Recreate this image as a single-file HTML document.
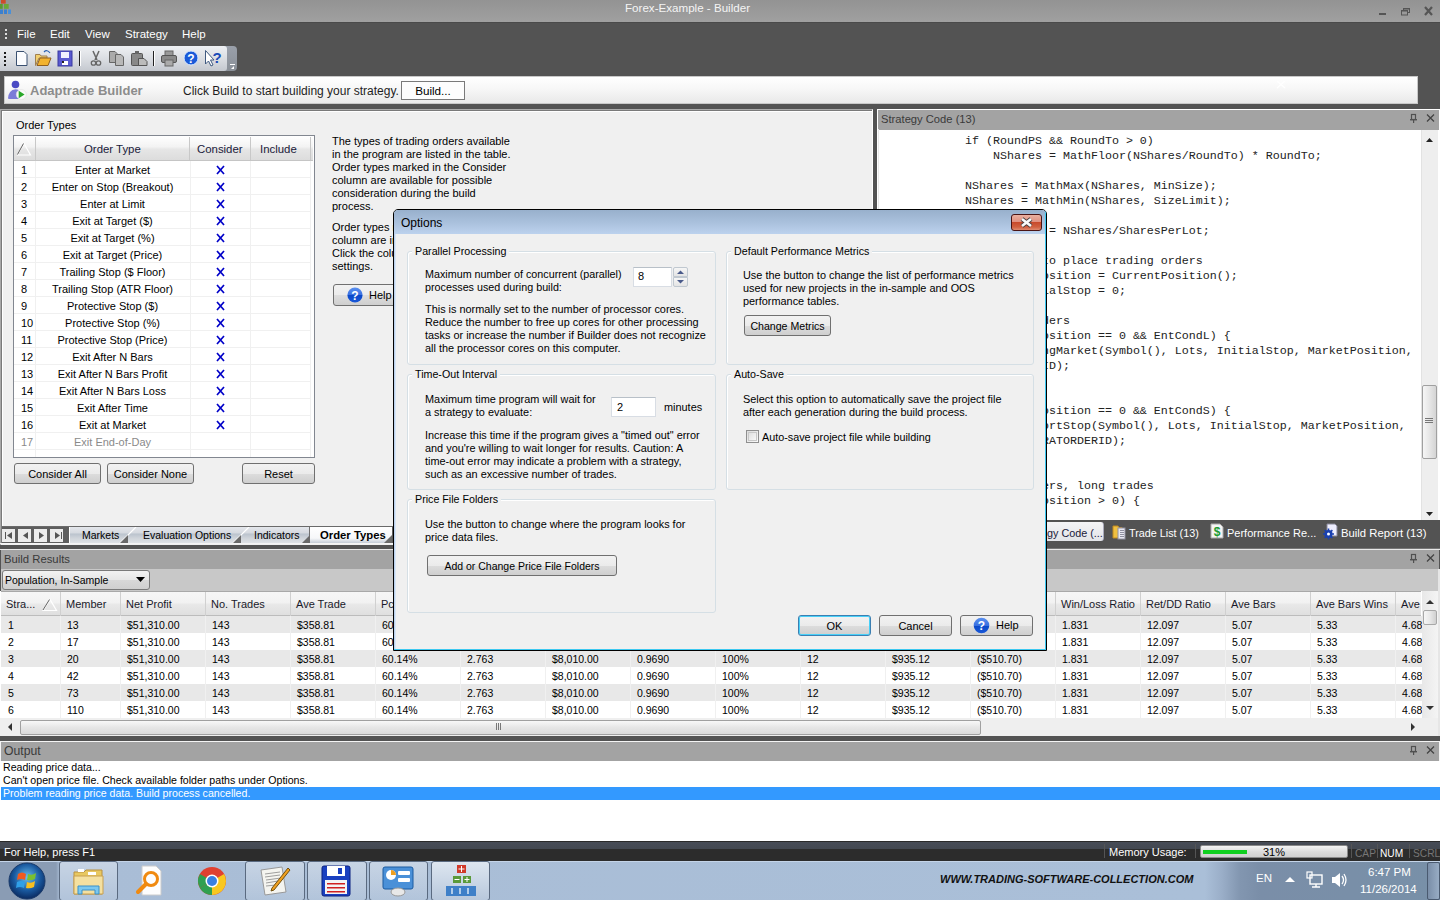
<!DOCTYPE html>
<html><head><meta charset="utf-8">
<style>
*{box-sizing:border-box;margin:0;padding:0}
html,body{width:1440px;height:900px;overflow:hidden;background:#535353;font-family:"Liberation Sans",sans-serif;font-size:11px;color:#000}
.a{position:absolute}
.t{position:absolute;white-space:pre;line-height:13px}
.btn{position:absolute;border:1px solid #707070;border-radius:3px;background:linear-gradient(#f2f2f2 0%,#ebebeb 50%,#dddddd 51%,#cfcfcf 100%);text-align:center;font-size:11px;color:#000}
.mono{font-family:"Liberation Mono",monospace}
</style></head><body>

<!-- TITLE BAR -->
<div class="a" style="left:0;top:0;width:1440px;height:22px;background:linear-gradient(#939393,#a0a0a0)"></div>
<div class="a" style="left:0;top:22px;width:1440px;height:1px;background:#4a4a4a"></div>
<div class="t" style="left:625px;top:1px;font-size:11.6px;color:#f4f4f4;line-height:14px">Forex-Example - Builder</div>
<!-- app icon -->
<svg class="a" style="left:0;top:0" width="12" height="16" viewBox="0 0 12 16"><rect x="1" y="0" width="4.7" height="3.6" fill="#d04a28"/><rect x="0" y="4" width="2.7" height="4.8" fill="#5a9a30"/><rect x="4" y="4" width="4.7" height="4.8" fill="#6aa838"/><rect x="0" y="9.5" width="3" height="4.5" fill="#3a80d0"/><rect x="4" y="9.5" width="3" height="4.5" fill="#3a80d0"/><rect x="8" y="9.5" width="3" height="4.5" fill="#4a90d8"/></svg>
<!-- window controls -->
<svg class="a" style="left:1376px;top:5px" width="64" height="12"><g fill="#555"><rect x="3" y="8" width="7" height="2"/></g>
<rect x="27.5" y="3.5" width="6" height="4" fill="none" stroke="#555"/><rect x="27" y="3" width="7" height="1.5" fill="#555"/>
<rect x="25.5" y="5.5" width="6" height="4.5" fill="#999" stroke="#555"/><rect x="25" y="5" width="7" height="1.5" fill="#555"/>
<path d="M49 2 L56 10 M56 2 L49 10" stroke="#555" stroke-width="2.2"/></svg>
<!-- MENU BAR -->
<div class="a" style="left:5px;top:29px;width:2px;height:12px;background:repeating-linear-gradient(#ddd 0 2px,transparent 2px 4px)"></div>
<div class="t" style="left:17px;top:28px;font-size:11.5px;color:#fff">File</div>
<div class="t" style="left:50px;top:28px;font-size:11.5px;color:#fff">Edit</div>
<div class="t" style="left:85px;top:28px;font-size:11.5px;color:#fff">View</div>
<div class="t" style="left:125px;top:28px;font-size:11.5px;color:#fff">Strategy</div>
<div class="t" style="left:182px;top:28px;font-size:11.5px;color:#fff">Help</div>

<!-- TOOLBAR -->
<div class="a" style="left:0;top:46px;width:237px;height:25px;border-radius:0 4px 4px 0;background:linear-gradient(#9aa0aa,#8a9098)"></div>
<div class="a" style="left:0;top:46px;width:227px;height:25px;border-radius:0 3px 3px 0;background:linear-gradient(#eef0f3,#d9dce1 55%,#c4c8cf)"></div>
<svg class="a" style="left:0;top:46px" width="240" height="25" viewBox="0 0 240 25">
<g fill="#1a1a1a"><rect x="4" y="6" width="2" height="2"/><rect x="4" y="10" width="2" height="2"/><rect x="4" y="14" width="2" height="2"/><rect x="4" y="18" width="2" height="2"/></g>
<!-- new -->
<path d="M16.5 5.5 H24 L27 8.5 V19.5 H16.5 Z" fill="#fbfcfe" stroke="#3a5070"/>
<!-- open -->
<path d="M35.5 8.5 H40 L41 10 H47 V12 H39 L35.5 19.5 Z" fill="#f2d070" stroke="#a08050"/>
<path d="M37 19.5 L40 12 H51 L48 19.5 Z" fill="#f2b330" stroke="#906020"/>
<path d="M44 6 Q47 3 50 7" fill="none" stroke="#2a60b0" stroke-width="1.2"/>
<!-- save -->
<rect x="58" y="5" width="14" height="15" fill="#5a5ad0" stroke="#3838a0"/>
<rect x="61" y="6" width="8" height="6" fill="#f0f0ff"/>
<rect x="62" y="15" width="6" height="4" fill="#fff"/><rect x="62" y="15" width="2" height="2" fill="#222"/>
<!-- sep -->
<rect x="79" y="5" width="1" height="15" fill="#222"/><rect x="80" y="5" width="1" height="15" fill="#fff"/>
<!-- cut -->
<path d="M93 5 L97 14 M99 5 L95 14" stroke="#666" stroke-width="1.5"/>
<circle cx="93.5" cy="17" r="2.2" fill="none" stroke="#666" stroke-width="1.3"/><circle cx="98.5" cy="17" r="2.2" fill="none" stroke="#666" stroke-width="1.3"/>
<!-- copy -->
<path d="M109.5 5.5 H115 L117 7.5 V16.5 H109.5 Z" fill="#aaa" stroke="#666"/>
<path d="M115.5 8.5 H121 L123.5 11 V19.5 H115.5 Z" fill="#b8b8b8" stroke="#666"/>
<!-- paste -->
<rect x="131.5" y="7.5" width="11" height="12" rx="1" fill="#888" stroke="#555"/>
<rect x="135" y="5" width="4" height="3" fill="#666"/>
<path d="M138.5 12.5 H144 L147 15.5 V19.5 H138.5 Z" fill="#bbb" stroke="#555"/>
<!-- sep -->
<rect x="153" y="5" width="1" height="15" fill="#222"/><rect x="154" y="5" width="1" height="15" fill="#fff"/>
<!-- print -->
<rect x="165" y="5" width="8" height="5" fill="#999" stroke="#666"/>
<rect x="161.5" y="9.5" width="15" height="7" rx="1.5" fill="#8a8a8a" stroke="#555"/>
<rect x="165" y="14" width="8" height="6" fill="#aaa" stroke="#666"/>
<!-- help -->
<circle cx="191" cy="12" r="7" fill="#1a5ad8" stroke="#d8e8ff" stroke-width="1"/>
<text x="191" y="16.5" font-family="Liberation Sans" font-weight="bold" font-size="12" fill="#fff" text-anchor="middle">?</text>
<!-- whats this -->
<path d="M205.5 4.5 L205.5 18 L208.5 15 L211 20 L213 19 L210.5 14 L214 14 Z" fill="#fff" stroke="#405a80"/>
<text x="217" y="16.5" font-family="Liberation Sans" font-weight="bold" font-size="15" fill="#1a4ab8" text-anchor="middle">?</text>
<!-- dropdown -->
<rect x="230" y="18" width="5" height="1" fill="#fff"/><path d="M234 20 L231 23 H234 Z" fill="#fff"/>
</svg>

<!-- BANNER -->
<div class="a" style="left:4px;top:76px;width:1414px;height:28px;background:linear-gradient(#ffffff,#f6f6f6 50%,#e9e9e9);border:1px solid #c8c8c8"></div>
<svg class="a" style="left:7px;top:80px" width="20" height="20" viewBox="0 0 20 20"><circle cx="8.5" cy="4.5" r="3.8" fill="#4a4ac4"/><path d="M1 18.5 Q1.5 10 8.5 9.3 Q12.5 9.6 13.5 12 L12 19 H2 Z" fill="#7c7cd8"/><circle cx="14.3" cy="14.5" r="5" fill="#fafafa" stroke="#e0e0e0" stroke-width="0.6"/><path d="M11.7 10.8 L17.6 14.5 L11.7 18.3 Z" fill="#2aa82a"/></svg>
<svg class="a banner-x" style="left:1276px;top:80px" width="10" height="9"><path d="M1 1 L9 8 M9 1 L1 8" stroke="#fff" stroke-width="1.2"/></svg>
<div class="t" style="left:30px;top:83px;font-size:13px;font-weight:bold;color:#8c8c8c;line-height:15px">Adaptrade Builder</div>
<div class="t" style="left:183px;top:84px;font-size:12px;color:#1e1e1e;line-height:15px">Click Build to start building your strategy.</div>
<div class="btn" style="left:401px;top:81px;width:64px;height:19px;line-height:18px;font-size:11.7px;border-radius:0;border-color:#7a7a7a;background:#fdfdfd">Build...</div>



<div class="a" style="left:0px;top:109px;width:873px;height:436px;background:#f0f0f0;border-top:1px solid #ababab;border-left:1px solid #a8a8a8;border-right:1px solid #fff"></div>
<div class="a" style="left:1px;top:110px;width:871px;height:433px;border-top:1px solid #7a7a7a;border-left:1px solid #7a7a7a;box-shadow:inset 1px 1px 0 #fff"></div>
<div class="t" style="left:16px;top:119px;font-size:11px;color:#000;line-height:13px;">Order Types</div>
<div class="a" style="left:13px;top:135px;width:302px;height:323px;background:#fff;border:1px solid #828790"></div>
<div class="a" style="left:14px;top:136px;width:299px;height:25px;background:linear-gradient(#ffffff,#f3f3f3 45%,#e6e6e6 55%,#dcdcdc);border-bottom:1px solid #c5c5c5"></div>
<div class="a" style="left:35px;top:137px;width:1px;height:23px;background:#c8c8c8"></div>
<div class="a" style="left:189px;top:137px;width:1px;height:23px;background:#c8c8c8"></div>
<div class="a" style="left:250px;top:137px;width:1px;height:23px;background:#c8c8c8"></div>
<div class="a" style="left:310px;top:137px;width:1px;height:23px;background:#c8c8c8"></div>
<svg class="a" style="left:16px;top:142px" width="16" height="14"><path d="M1.5 13 L8 1.5 L14.5 13 Z" fill="none" stroke="#fff" stroke-width="1.2"/><path d="M1.5 12.5 L7.5 1.5" stroke="#606060" stroke-width="1"/></svg>
<div class="t" style="left:84px;top:143px;font-size:11.4px;color:#1a1a3a;line-height:13px;">Order Type</div>
<div class="t" style="left:197px;top:143px;font-size:11.4px;color:#1a1a3a;line-height:13px;">Consider</div>
<div class="t" style="left:260px;top:143px;font-size:11.4px;color:#1a1a3a;line-height:13px;">Include</div>
<div class="a" style="left:14px;top:177px;width:296px;height:1px;background:#f0f0f0"></div>
<div class="t" style="left:21px;top:164px;font-size:11px;color:#000;line-height:13px;">1</div>
<div class="t" style="left:35px;top:164px;width:155px;text-align:center;font-size:11px;color:#000">Enter at Market</div>
<svg class="a" style="left:216px;top:165px" width="9" height="10"><path d="M1 1 L8 9 M8 1 L1 9" stroke="#0000c8" stroke-width="1.7"/></svg>
<div class="a" style="left:14px;top:194px;width:296px;height:1px;background:#f0f0f0"></div>
<div class="t" style="left:21px;top:181px;font-size:11px;color:#000;line-height:13px;">2</div>
<div class="t" style="left:35px;top:181px;width:155px;text-align:center;font-size:11px;color:#000">Enter on Stop (Breakout)</div>
<svg class="a" style="left:216px;top:182px" width="9" height="10"><path d="M1 1 L8 9 M8 1 L1 9" stroke="#0000c8" stroke-width="1.7"/></svg>
<div class="a" style="left:14px;top:211px;width:296px;height:1px;background:#f0f0f0"></div>
<div class="t" style="left:21px;top:198px;font-size:11px;color:#000;line-height:13px;">3</div>
<div class="t" style="left:35px;top:198px;width:155px;text-align:center;font-size:11px;color:#000">Enter at Limit</div>
<svg class="a" style="left:216px;top:199px" width="9" height="10"><path d="M1 1 L8 9 M8 1 L1 9" stroke="#0000c8" stroke-width="1.7"/></svg>
<div class="a" style="left:14px;top:228px;width:296px;height:1px;background:#f0f0f0"></div>
<div class="t" style="left:21px;top:215px;font-size:11px;color:#000;line-height:13px;">4</div>
<div class="t" style="left:35px;top:215px;width:155px;text-align:center;font-size:11px;color:#000">Exit at Target ($)</div>
<svg class="a" style="left:216px;top:216px" width="9" height="10"><path d="M1 1 L8 9 M8 1 L1 9" stroke="#0000c8" stroke-width="1.7"/></svg>
<div class="a" style="left:14px;top:245px;width:296px;height:1px;background:#f0f0f0"></div>
<div class="t" style="left:21px;top:232px;font-size:11px;color:#000;line-height:13px;">5</div>
<div class="t" style="left:35px;top:232px;width:155px;text-align:center;font-size:11px;color:#000">Exit at Target (%)</div>
<svg class="a" style="left:216px;top:233px" width="9" height="10"><path d="M1 1 L8 9 M8 1 L1 9" stroke="#0000c8" stroke-width="1.7"/></svg>
<div class="a" style="left:14px;top:262px;width:296px;height:1px;background:#f0f0f0"></div>
<div class="t" style="left:21px;top:249px;font-size:11px;color:#000;line-height:13px;">6</div>
<div class="t" style="left:35px;top:249px;width:155px;text-align:center;font-size:11px;color:#000">Exit at Target (Price)</div>
<svg class="a" style="left:216px;top:250px" width="9" height="10"><path d="M1 1 L8 9 M8 1 L1 9" stroke="#0000c8" stroke-width="1.7"/></svg>
<div class="a" style="left:14px;top:279px;width:296px;height:1px;background:#f0f0f0"></div>
<div class="t" style="left:21px;top:266px;font-size:11px;color:#000;line-height:13px;">7</div>
<div class="t" style="left:35px;top:266px;width:155px;text-align:center;font-size:11px;color:#000">Trailing Stop ($ Floor)</div>
<svg class="a" style="left:216px;top:267px" width="9" height="10"><path d="M1 1 L8 9 M8 1 L1 9" stroke="#0000c8" stroke-width="1.7"/></svg>
<div class="a" style="left:14px;top:296px;width:296px;height:1px;background:#f0f0f0"></div>
<div class="t" style="left:21px;top:283px;font-size:11px;color:#000;line-height:13px;">8</div>
<div class="t" style="left:35px;top:283px;width:155px;text-align:center;font-size:11px;color:#000">Trailing Stop (ATR Floor)</div>
<svg class="a" style="left:216px;top:284px" width="9" height="10"><path d="M1 1 L8 9 M8 1 L1 9" stroke="#0000c8" stroke-width="1.7"/></svg>
<div class="a" style="left:14px;top:313px;width:296px;height:1px;background:#f0f0f0"></div>
<div class="t" style="left:21px;top:300px;font-size:11px;color:#000;line-height:13px;">9</div>
<div class="t" style="left:35px;top:300px;width:155px;text-align:center;font-size:11px;color:#000">Protective Stop ($)</div>
<svg class="a" style="left:216px;top:301px" width="9" height="10"><path d="M1 1 L8 9 M8 1 L1 9" stroke="#0000c8" stroke-width="1.7"/></svg>
<div class="a" style="left:14px;top:330px;width:296px;height:1px;background:#f0f0f0"></div>
<div class="t" style="left:21px;top:317px;font-size:11px;color:#000;line-height:13px;">10</div>
<div class="t" style="left:35px;top:317px;width:155px;text-align:center;font-size:11px;color:#000">Protective Stop (%)</div>
<svg class="a" style="left:216px;top:318px" width="9" height="10"><path d="M1 1 L8 9 M8 1 L1 9" stroke="#0000c8" stroke-width="1.7"/></svg>
<div class="a" style="left:14px;top:347px;width:296px;height:1px;background:#f0f0f0"></div>
<div class="t" style="left:21px;top:334px;font-size:11px;color:#000;line-height:13px;">11</div>
<div class="t" style="left:35px;top:334px;width:155px;text-align:center;font-size:11px;color:#000">Protective Stop (Price)</div>
<svg class="a" style="left:216px;top:335px" width="9" height="10"><path d="M1 1 L8 9 M8 1 L1 9" stroke="#0000c8" stroke-width="1.7"/></svg>
<div class="a" style="left:14px;top:364px;width:296px;height:1px;background:#f0f0f0"></div>
<div class="t" style="left:21px;top:351px;font-size:11px;color:#000;line-height:13px;">12</div>
<div class="t" style="left:35px;top:351px;width:155px;text-align:center;font-size:11px;color:#000">Exit After N Bars</div>
<svg class="a" style="left:216px;top:352px" width="9" height="10"><path d="M1 1 L8 9 M8 1 L1 9" stroke="#0000c8" stroke-width="1.7"/></svg>
<div class="a" style="left:14px;top:381px;width:296px;height:1px;background:#f0f0f0"></div>
<div class="t" style="left:21px;top:368px;font-size:11px;color:#000;line-height:13px;">13</div>
<div class="t" style="left:35px;top:368px;width:155px;text-align:center;font-size:11px;color:#000">Exit After N Bars Profit</div>
<svg class="a" style="left:216px;top:369px" width="9" height="10"><path d="M1 1 L8 9 M8 1 L1 9" stroke="#0000c8" stroke-width="1.7"/></svg>
<div class="a" style="left:14px;top:398px;width:296px;height:1px;background:#f0f0f0"></div>
<div class="t" style="left:21px;top:385px;font-size:11px;color:#000;line-height:13px;">14</div>
<div class="t" style="left:35px;top:385px;width:155px;text-align:center;font-size:11px;color:#000">Exit After N Bars Loss</div>
<svg class="a" style="left:216px;top:386px" width="9" height="10"><path d="M1 1 L8 9 M8 1 L1 9" stroke="#0000c8" stroke-width="1.7"/></svg>
<div class="a" style="left:14px;top:415px;width:296px;height:1px;background:#f0f0f0"></div>
<div class="t" style="left:21px;top:402px;font-size:11px;color:#000;line-height:13px;">15</div>
<div class="t" style="left:35px;top:402px;width:155px;text-align:center;font-size:11px;color:#000">Exit After Time</div>
<svg class="a" style="left:216px;top:403px" width="9" height="10"><path d="M1 1 L8 9 M8 1 L1 9" stroke="#0000c8" stroke-width="1.7"/></svg>
<div class="a" style="left:14px;top:432px;width:296px;height:1px;background:#f0f0f0"></div>
<div class="t" style="left:21px;top:419px;font-size:11px;color:#000;line-height:13px;">16</div>
<div class="t" style="left:35px;top:419px;width:155px;text-align:center;font-size:11px;color:#000">Exit at Market</div>
<svg class="a" style="left:216px;top:420px" width="9" height="10"><path d="M1 1 L8 9 M8 1 L1 9" stroke="#0000c8" stroke-width="1.7"/></svg>
<div class="a" style="left:14px;top:449px;width:296px;height:1px;background:#f0f0f0"></div>
<div class="t" style="left:21px;top:436px;font-size:11px;color:#8a8a8a;line-height:13px;">17</div>
<div class="t" style="left:35px;top:436px;width:155px;text-align:center;font-size:11px;color:#8a8a8a">Exit End-of-Day</div>
<div class="a" style="left:35px;top:161px;width:1px;height:296px;background:#f0f0f0"></div>
<div class="a" style="left:190px;top:161px;width:1px;height:296px;background:#f0f0f0"></div>
<div class="a" style="left:250px;top:161px;width:1px;height:296px;background:#f0f0f0"></div>
<div class="a" style="left:310px;top:161px;width:1px;height:296px;background:#f0f0f0"></div>
<div class="btn" style="left:14px;top:463px;width:87px;height:21px;line-height:19px;padding-top:1px;font-size:11px;">Consider All</div>
<div class="btn" style="left:107px;top:463px;width:87px;height:21px;line-height:19px;padding-top:1px;font-size:11px;">Consider None</div>
<div class="btn" style="left:242px;top:463px;width:73px;height:21px;line-height:19px;padding-top:1px;font-size:11px;">Reset</div>
<div class="t" style="left:332px;top:135px;font-size:11px;color:#000;line-height:13px;">The types of trading orders available</div>
<div class="t" style="left:332px;top:148px;font-size:11px;color:#000;line-height:13px;">in the program are listed in the table.</div>
<div class="t" style="left:332px;top:161px;font-size:11px;color:#000;line-height:13px;">Order types marked in the Consider</div>
<div class="t" style="left:332px;top:174px;font-size:11px;color:#000;line-height:13px;">column are available for possible</div>
<div class="t" style="left:332px;top:187px;font-size:11px;color:#000;line-height:13px;">consideration during the build</div>
<div class="t" style="left:332px;top:200px;font-size:11px;color:#000;line-height:13px;">process.</div>
<div class="t" style="left:332px;top:221px;font-size:11px;color:#000;line-height:13px;">Order types marked in the Include</div>
<div class="t" style="left:332px;top:234px;font-size:11px;color:#000;line-height:13px;">column are included in every strategy.</div>
<div class="t" style="left:332px;top:247px;font-size:11px;color:#000;line-height:13px;">Click the column headers to change</div>
<div class="t" style="left:332px;top:260px;font-size:11px;color:#000;line-height:13px;">settings.</div>
<div class="btn" style="left:333px;top:284px;width:80px;height:22px"></div>
<svg class="a" style="left:347px;top:287px" width="17" height="17"><defs><linearGradient id="hg1" x1="0" y1="0" x2="0" y2="1"><stop offset="0" stop-color="#5a90f0"/><stop offset="0.5" stop-color="#3a70e0"/><stop offset="0.51" stop-color="#0a48c8"/><stop offset="1" stop-color="#1a58d8"/></linearGradient></defs><circle cx="8" cy="8" r="7.6" fill="url(#hg1)"/><text x="8" y="12.6" font-family="Liberation Sans" font-weight="bold" font-size="12" fill="#fff" text-anchor="middle">?</text></svg>
<div class="t" style="left:369px;top:289px;font-size:11px;color:#000;line-height:13px;">Help</div>
<div class="a" style="left:2px;top:526px;width:870px;height:1px;background:#6a6a6a"></div>
<div class="a" style="left:2px;top:527px;width:870px;height:16px;background:#5e5e5e"></div>
<div class="a" style="left:2px;top:529px;width:13px;height:13px;background:#ececec"></div>
<div class="a" style="left:18px;top:529px;width:13px;height:13px;background:#ececec"></div>
<div class="a" style="left:34px;top:529px;width:13px;height:13px;background:#ececec"></div>
<div class="a" style="left:50px;top:529px;width:13px;height:13px;background:#ececec"></div>
<svg class="a" style="left:2px;top:529px" width="64" height="13"><g fill="#555"><rect x="3" y="3" width="1" height="7"/><path d="M10 3 L5 6.5 L10 10 Z"/><path d="M26 3 L21 6.5 L26 10 Z"/><path d="M37 3 L42 6.5 L37 10 Z"/><path d="M53 3 L58 6.5 L53 10 Z"/><rect x="59" y="3" width="1" height="7"/></g></svg>
<svg class="a" style="left:0;top:527px" width="400" height="16"><defs><linearGradient id="tg" x1="0" y1="0" x2="0" y2="1"><stop offset="0" stop-color="#e4e7ec"/><stop offset="0.35" stop-color="#d6dae0"/><stop offset="0.45" stop-color="#bcc4ce"/><stop offset="0.7" stop-color="#cfd4da"/><stop offset="1" stop-color="#dfe2e6"/></linearGradient><linearGradient id="ta" x1="0" y1="0" x2="0" y2="1"><stop offset="0" stop-color="#ffffff"/><stop offset="0.7" stop-color="#f6f7f9"/><stop offset="1" stop-color="#c4ccd6"/></linearGradient></defs><rect x="69" y="0" width="323" height="16" fill="url(#tg)"/><rect x="69" y="0" width="1" height="16" fill="#fff"/><path d="M310 0 H392 V16 H310 Z" fill="url(#ta)"/><path d="M136 0 L120 16" stroke="#fff" stroke-width="1.2"/><path d="M128 8 L120 16 H128 Z" fill="#6a6a6a"/><path d="M249 0 L233 16" stroke="#fff" stroke-width="1.2"/><path d="M241 8 L233 16 H241 Z" fill="#6a6a6a"/><rect x="309" y="0" width="1" height="16" fill="#707070"/><path d="M310 8 L302 16 H310 Z" fill="#6a6a6a"/><path d="M392 8 L384 16 H392 Z" fill="#6a6a6a"/></svg>
<div class="t" style="left:82px;top:529px;font-size:10.5px;color:#000;line-height:13px;">Markets</div>
<div class="t" style="left:143px;top:529px;font-size:10.5px;color:#000;line-height:13px;">Evaluation Options</div>
<div class="t" style="left:254px;top:529px;font-size:10.5px;color:#000;line-height:13px;">Indicators</div>
<div class="t" style="left:320px;top:529px;font-size:11.3px;color:#000;line-height:13px;font-weight:bold">Order Types</div>
<div class="a" style="left:0px;top:543px;width:873px;height:1px;background:#f4f4f4"></div>
<div class="a" style="left:877px;top:109px;width:563px;height:411px;background:#fff;border-left:1px solid #fff;border-top:1px solid #fff"></div>
<div class="a" style="left:878px;top:110px;width:561px;height:20px;background:#a3a3a3"></div>
<div class="t" style="left:881px;top:113px;font-size:11.2px;color:#3a3a3a;line-height:13px;">Strategy Code (13)</div>
<svg class="a" style="left:1408px;top:113px" width="30" height="12"><g fill="#505050"><rect x="3.5" y="1.5" width="4" height="5" fill="none" stroke="#505050" stroke-width="1.2"/><rect x="2" y="6" width="7" height="1.4"/><rect x="5" y="7" width="1.2" height="3"/></g><path d="M19 1.5 L26 8.5 M26 1.5 L19 8.5" stroke="#444" stroke-width="1.3"/></svg>
<div class="a" style="left:878px;top:129px;width:1px;height:391px;background:#e8e8e8"></div>
<div class="a" style="left:1421px;top:130px;width:17px;height:390px;background:#eeeeee;border-left:1px solid #e2e2e2"></div>
<svg class="a" style="left:1421px;top:130px" width="17" height="390"><path d="M5 12 L8.5 8 L12 12 Z" fill="#222"/><path d="M5 382 L8.5 386 L12 382 Z" fill="#222"/></svg>
<div class="a" style="left:1422px;top:385px;width:15px;height:74px;background:linear-gradient(90deg,#f6f6f6,#e6e6e6 50%,#d4d4d4);border:1px solid #a0a0a0;border-radius:2px"></div>
<svg class="a" style="left:1425px;top:417px" width="9" height="8"><g fill="#777"><rect x="0" y="1" width="8" height="1"/><rect x="0" y="3" width="8" height="1"/><rect x="0" y="5" width="8" height="1"/></g></svg>
<div class="a" style="left:879px;top:130px;width:542px;height:390px;overflow:hidden">
<div class="t mono" style="left:86px;top:4px;font-size:11.67px;line-height:15px;color:#222">if (RoundPS &amp;&amp; RoundTo &gt; 0)</div>
<div class="t mono" style="left:114px;top:19px;font-size:11.67px;line-height:15px;color:#222">NShares = MathFloor(NShares/RoundTo) * RoundTo;</div>
<div class="t mono" style="left:86px;top:49px;font-size:11.67px;line-height:15px;color:#222">NShares = MathMax(NShares, MinSize);</div>
<div class="t mono" style="left:86px;top:64px;font-size:11.67px;line-height:15px;color:#222">NShares = MathMin(NShares, SizeLimit);</div>
<div class="t mono" style="left:86px;top:94px;font-size:11.67px;line-height:15px;color:#222">LotsToTrade = NShares/SharesPerLot;</div>
<div class="t mono" style="left:86px;top:124px;font-size:11.67px;line-height:15px;color:#222">// Prepare to place trading orders</div>
<div class="t mono" style="left:86px;top:139px;font-size:11.67px;line-height:15px;color:#222">CurrMarketPosition = CurrentPosition();</div>
<div class="t mono" style="left:86px;top:154px;font-size:11.67px;line-height:15px;color:#222">DefaultInitialStop = 0;</div>
<div class="t mono" style="left:86px;top:184px;font-size:11.67px;line-height:15px;color:#222">// Entry orders</div>
<div class="t mono" style="left:86px;top:199px;font-size:11.67px;line-height:15px;color:#222">if (MarketPosition == 0 &amp;&amp; EntCondL) {</div>
<div class="t mono" style="left:86px;top:214px;font-size:11.67px;line-height:15px;color:#222"> OrderSendingMarket(Symbol(), Lots, InitialStop, MarketPosition,</div>
<div class="t mono" style="left:86px;top:229px;font-size:11.67px;line-height:15px;color:#222">      ORDERID);</div>
<div class="t mono" style="left:86px;top:274px;font-size:11.67px;line-height:15px;color:#222">if (MarketPosition == 0 &amp;&amp; EntCondS) {</div>
<div class="t mono" style="left:86px;top:289px;font-size:11.67px;line-height:15px;color:#222">OrderSendShortStop(Symbol(), Lots, InitialStop, MarketPosition,</div>
<div class="t mono" style="left:86px;top:304px;font-size:11.67px;line-height:15px;color:#222">       GENERATORDERID);</div>
<div class="t mono" style="left:86px;top:349px;font-size:11.67px;line-height:15px;color:#222">// Exit orders, long trades</div>
<div class="t mono" style="left:86px;top:364px;font-size:11.67px;line-height:15px;color:#222">if (MarketPosition &gt; 0) {</div>
</div>
<div class="a" style="left:873px;top:520px;width:567px;height:28px;background:#535353"></div>
<div class="a" style="left:1000px;top:522px;width:104px;height:19px;background:linear-gradient(#f4f4f6,#e2e4e8);border-radius:0 3px 3px 0;border-right:1px solid #aab"></div>
<div class="t" style="left:1047px;top:527px;font-size:10.8px;color:#1a1a3a;line-height:13px;">gy Code (...</div>
<svg class="a" style="left:1112px;top:524px" width="16" height="16"><path d="M1 2 H6 L7 3.5 H10 V14 H1 Z" fill="#f0c040" stroke="#c08a20"/><rect x="6" y="4" width="7" height="11" fill="#e8e8f0" stroke="#9090a0"/><g fill="#9090a0"><rect x="8" y="6" width="4" height="1"/><rect x="8" y="8" width="4" height="1"/><rect x="8" y="10" width="4" height="1"/><rect x="8" y="12" width="4" height="1"/></g></svg>
<div class="t" style="left:1129px;top:527px;font-size:10.8px;color:#fff;line-height:13px;">Trade List (13)</div>
<svg class="a" style="left:1210px;top:523px" width="14" height="16"><path d="M1 1 H10 L13 4 V15 H1 Z" fill="#f4f4f4" stroke="#aaa"/><text x="7" y="13" font-family="Liberation Sans" font-weight="bold" font-size="12" fill="#1a9a30" text-anchor="middle">$</text></svg>
<div class="t" style="left:1227px;top:527px;font-size:11px;color:#fff;line-height:13px;">Performance Re...</div>
<svg class="a" style="left:1322px;top:523px" width="17" height="17"><path d="M5 1 H13 L15 3 V13 H5 Z" fill="#eef" stroke="#889"/><circle cx="6.5" cy="11" r="4" fill="#1a40b0"/><circle cx="6.5" cy="11" r="1.5" fill="#fff"/><g stroke="#1a40b0" stroke-width="1.6"><path d="M6.5 5.5 V16.5 M1 11 H12 M2.6 7.1 L10.4 14.9 M10.4 7.1 L2.6 14.9"/></g><circle cx="6.5" cy="11" r="1.5" fill="#fff"/></svg>
<div class="t" style="left:1341px;top:527px;font-size:11.3px;color:#fff;line-height:13px;">Build Report (13)</div>
<div class="a" style="left:873px;top:548px;width:567px;height:1px;background:#777"></div>
<div class="a" style="left:0px;top:549px;width:1440px;height:1px;background:#e8e8e8"></div>
<div class="a" style="left:1px;top:550px;width:1438px;height:19px;background:#a3a3a3"></div>
<div class="t" style="left:4px;top:553px;font-size:11.3px;color:#3a3a3a;line-height:13px;">Build Results</div>
<svg class="a" style="left:1408px;top:553px" width="30" height="12"><g fill="#505050"><rect x="3.5" y="1.5" width="4" height="5" fill="none" stroke="#505050" stroke-width="1.2"/><rect x="2" y="6" width="7" height="1.4"/><rect x="5" y="7" width="1.2" height="3"/></g><path d="M19 1.5 L26 8.5 M26 1.5 L19 8.5" stroke="#444" stroke-width="1.3"/></svg>
<div class="a" style="left:1px;top:569px;width:1438px;height:22px;background:#c8c8c8"></div>
<div class="a" style="left:2px;top:570px;width:148px;height:20px;border:1px solid #7a7a7a;border-radius:3px;background:linear-gradient(#f2f2f2,#e6e6e6 50%,#d8d8d8 51%,#cfcfcf)"></div>
<div class="t" style="left:5px;top:574px;font-size:10.5px;color:#000;line-height:13px;">Population, In-Sample</div>
<svg class="a" style="left:136px;top:577px" width="9" height="6"><path d="M0 0 H9 L4.5 5 Z" fill="#000"/></svg>
<div class="a" style="left:0px;top:591px;width:1422px;height:127px;background:#fff"></div>
<div class="a" style="left:1px;top:591px;width:1420px;height:25px;background:linear-gradient(#f6f6f6,#f2f2f2 45%,#e8e8e8 55%,#dfdfdf);border-top:1px solid #a8a8a8;border-bottom:1px solid #bcbcbc"></div>
<div class="a" style="left:1px;top:616px;width:1421px;height:17px;background:#e8e8e8"></div>
<div class="a" style="left:1px;top:633px;width:1421px;height:17px;background:#ffffff"></div>
<div class="a" style="left:1px;top:650px;width:1421px;height:17px;background:#e8e8e8"></div>
<div class="a" style="left:1px;top:667px;width:1421px;height:17px;background:#ffffff"></div>
<div class="a" style="left:1px;top:684px;width:1421px;height:17px;background:#e8e8e8"></div>
<div class="a" style="left:1px;top:701px;width:1421px;height:17px;background:#ffffff"></div>
<div class="a" style="left:0;top:591px;width:1422px;height:127px;overflow:hidden">
<div class="t" style="left:6px;top:7px;font-size:11px;color:#1a1a2a;line-height:13px;">Stra...</div>
<div class="t" style="left:8px;top:28px;font-size:10.5px;color:#000;line-height:13px;">1</div>
<div class="t" style="left:8px;top:45px;font-size:10.5px;color:#000;line-height:13px;">2</div>
<div class="t" style="left:8px;top:62px;font-size:10.5px;color:#000;line-height:13px;">3</div>
<div class="t" style="left:8px;top:79px;font-size:10.5px;color:#000;line-height:13px;">4</div>
<div class="t" style="left:8px;top:96px;font-size:10.5px;color:#000;line-height:13px;">5</div>
<div class="t" style="left:8px;top:113px;font-size:10.5px;color:#000;line-height:13px;">6</div>
<div class="a" style="left:60px;top:1px;width:1px;height:24px;background:#d0d0d0"></div>
<div class="a" style="left:60px;top:25px;width:1px;height:102px;background:#f0f0f0"></div>
<div class="t" style="left:66px;top:7px;font-size:11px;color:#1a1a2a;line-height:13px;">Member</div>
<div class="t" style="left:67px;top:28px;font-size:10.5px;color:#000;line-height:13px;">13</div>
<div class="t" style="left:67px;top:45px;font-size:10.5px;color:#000;line-height:13px;">17</div>
<div class="t" style="left:67px;top:62px;font-size:10.5px;color:#000;line-height:13px;">20</div>
<div class="t" style="left:67px;top:79px;font-size:10.5px;color:#000;line-height:13px;">42</div>
<div class="t" style="left:67px;top:96px;font-size:10.5px;color:#000;line-height:13px;">73</div>
<div class="t" style="left:67px;top:113px;font-size:10.5px;color:#000;line-height:13px;">110</div>
<div class="a" style="left:120px;top:1px;width:1px;height:24px;background:#d0d0d0"></div>
<div class="a" style="left:120px;top:25px;width:1px;height:102px;background:#f0f0f0"></div>
<div class="t" style="left:126px;top:7px;font-size:11px;color:#1a1a2a;line-height:13px;">Net Profit</div>
<div class="t" style="left:127px;top:28px;font-size:10.5px;color:#000;line-height:13px;">$51,310.00</div>
<div class="t" style="left:127px;top:45px;font-size:10.5px;color:#000;line-height:13px;">$51,310.00</div>
<div class="t" style="left:127px;top:62px;font-size:10.5px;color:#000;line-height:13px;">$51,310.00</div>
<div class="t" style="left:127px;top:79px;font-size:10.5px;color:#000;line-height:13px;">$51,310.00</div>
<div class="t" style="left:127px;top:96px;font-size:10.5px;color:#000;line-height:13px;">$51,310.00</div>
<div class="t" style="left:127px;top:113px;font-size:10.5px;color:#000;line-height:13px;">$51,310.00</div>
<div class="a" style="left:205px;top:1px;width:1px;height:24px;background:#d0d0d0"></div>
<div class="a" style="left:205px;top:25px;width:1px;height:102px;background:#f0f0f0"></div>
<div class="t" style="left:211px;top:7px;font-size:11px;color:#1a1a2a;line-height:13px;">No. Trades</div>
<div class="t" style="left:212px;top:28px;font-size:10.5px;color:#000;line-height:13px;">143</div>
<div class="t" style="left:212px;top:45px;font-size:10.5px;color:#000;line-height:13px;">143</div>
<div class="t" style="left:212px;top:62px;font-size:10.5px;color:#000;line-height:13px;">143</div>
<div class="t" style="left:212px;top:79px;font-size:10.5px;color:#000;line-height:13px;">143</div>
<div class="t" style="left:212px;top:96px;font-size:10.5px;color:#000;line-height:13px;">143</div>
<div class="t" style="left:212px;top:113px;font-size:10.5px;color:#000;line-height:13px;">143</div>
<div class="a" style="left:290px;top:1px;width:1px;height:24px;background:#d0d0d0"></div>
<div class="a" style="left:290px;top:25px;width:1px;height:102px;background:#f0f0f0"></div>
<div class="t" style="left:296px;top:7px;font-size:11px;color:#1a1a2a;line-height:13px;">Ave Trade</div>
<div class="t" style="left:297px;top:28px;font-size:10.5px;color:#000;line-height:13px;">$358.81</div>
<div class="t" style="left:297px;top:45px;font-size:10.5px;color:#000;line-height:13px;">$358.81</div>
<div class="t" style="left:297px;top:62px;font-size:10.5px;color:#000;line-height:13px;">$358.81</div>
<div class="t" style="left:297px;top:79px;font-size:10.5px;color:#000;line-height:13px;">$358.81</div>
<div class="t" style="left:297px;top:96px;font-size:10.5px;color:#000;line-height:13px;">$358.81</div>
<div class="t" style="left:297px;top:113px;font-size:10.5px;color:#000;line-height:13px;">$358.81</div>
<div class="a" style="left:375px;top:1px;width:1px;height:24px;background:#d0d0d0"></div>
<div class="a" style="left:375px;top:25px;width:1px;height:102px;background:#f0f0f0"></div>
<div class="t" style="left:381px;top:7px;font-size:11px;color:#1a1a2a;line-height:13px;">Pct Wins</div>
<div class="t" style="left:382px;top:28px;font-size:10.5px;color:#000;line-height:13px;">60.14%</div>
<div class="t" style="left:382px;top:45px;font-size:10.5px;color:#000;line-height:13px;">60.14%</div>
<div class="t" style="left:382px;top:62px;font-size:10.5px;color:#000;line-height:13px;">60.14%</div>
<div class="t" style="left:382px;top:79px;font-size:10.5px;color:#000;line-height:13px;">60.14%</div>
<div class="t" style="left:382px;top:96px;font-size:10.5px;color:#000;line-height:13px;">60.14%</div>
<div class="t" style="left:382px;top:113px;font-size:10.5px;color:#000;line-height:13px;">60.14%</div>
<div class="a" style="left:460px;top:1px;width:1px;height:24px;background:#d0d0d0"></div>
<div class="a" style="left:460px;top:25px;width:1px;height:102px;background:#f0f0f0"></div>
<div class="t" style="left:466px;top:7px;font-size:11px;color:#1a1a2a;line-height:13px;"></div>
<div class="t" style="left:467px;top:28px;font-size:10.5px;color:#000;line-height:13px;">2.763</div>
<div class="t" style="left:467px;top:45px;font-size:10.5px;color:#000;line-height:13px;">2.763</div>
<div class="t" style="left:467px;top:62px;font-size:10.5px;color:#000;line-height:13px;">2.763</div>
<div class="t" style="left:467px;top:79px;font-size:10.5px;color:#000;line-height:13px;">2.763</div>
<div class="t" style="left:467px;top:96px;font-size:10.5px;color:#000;line-height:13px;">2.763</div>
<div class="t" style="left:467px;top:113px;font-size:10.5px;color:#000;line-height:13px;">2.763</div>
<div class="a" style="left:545px;top:1px;width:1px;height:24px;background:#d0d0d0"></div>
<div class="a" style="left:545px;top:25px;width:1px;height:102px;background:#f0f0f0"></div>
<div class="t" style="left:551px;top:7px;font-size:11px;color:#1a1a2a;line-height:13px;"></div>
<div class="t" style="left:552px;top:28px;font-size:10.5px;color:#000;line-height:13px;">$8,010.00</div>
<div class="t" style="left:552px;top:45px;font-size:10.5px;color:#000;line-height:13px;">$8,010.00</div>
<div class="t" style="left:552px;top:62px;font-size:10.5px;color:#000;line-height:13px;">$8,010.00</div>
<div class="t" style="left:552px;top:79px;font-size:10.5px;color:#000;line-height:13px;">$8,010.00</div>
<div class="t" style="left:552px;top:96px;font-size:10.5px;color:#000;line-height:13px;">$8,010.00</div>
<div class="t" style="left:552px;top:113px;font-size:10.5px;color:#000;line-height:13px;">$8,010.00</div>
<div class="a" style="left:630px;top:1px;width:1px;height:24px;background:#d0d0d0"></div>
<div class="a" style="left:630px;top:25px;width:1px;height:102px;background:#f0f0f0"></div>
<div class="t" style="left:636px;top:7px;font-size:11px;color:#1a1a2a;line-height:13px;"></div>
<div class="t" style="left:637px;top:28px;font-size:10.5px;color:#000;line-height:13px;">0.9690</div>
<div class="t" style="left:637px;top:45px;font-size:10.5px;color:#000;line-height:13px;">0.9690</div>
<div class="t" style="left:637px;top:62px;font-size:10.5px;color:#000;line-height:13px;">0.9690</div>
<div class="t" style="left:637px;top:79px;font-size:10.5px;color:#000;line-height:13px;">0.9690</div>
<div class="t" style="left:637px;top:96px;font-size:10.5px;color:#000;line-height:13px;">0.9690</div>
<div class="t" style="left:637px;top:113px;font-size:10.5px;color:#000;line-height:13px;">0.9690</div>
<div class="a" style="left:715px;top:1px;width:1px;height:24px;background:#d0d0d0"></div>
<div class="a" style="left:715px;top:25px;width:1px;height:102px;background:#f0f0f0"></div>
<div class="t" style="left:721px;top:7px;font-size:11px;color:#1a1a2a;line-height:13px;"></div>
<div class="t" style="left:722px;top:28px;font-size:10.5px;color:#000;line-height:13px;">100%</div>
<div class="t" style="left:722px;top:45px;font-size:10.5px;color:#000;line-height:13px;">100%</div>
<div class="t" style="left:722px;top:62px;font-size:10.5px;color:#000;line-height:13px;">100%</div>
<div class="t" style="left:722px;top:79px;font-size:10.5px;color:#000;line-height:13px;">100%</div>
<div class="t" style="left:722px;top:96px;font-size:10.5px;color:#000;line-height:13px;">100%</div>
<div class="t" style="left:722px;top:113px;font-size:10.5px;color:#000;line-height:13px;">100%</div>
<div class="a" style="left:800px;top:1px;width:1px;height:24px;background:#d0d0d0"></div>
<div class="a" style="left:800px;top:25px;width:1px;height:102px;background:#f0f0f0"></div>
<div class="t" style="left:806px;top:7px;font-size:11px;color:#1a1a2a;line-height:13px;"></div>
<div class="t" style="left:807px;top:28px;font-size:10.5px;color:#000;line-height:13px;">12</div>
<div class="t" style="left:807px;top:45px;font-size:10.5px;color:#000;line-height:13px;">12</div>
<div class="t" style="left:807px;top:62px;font-size:10.5px;color:#000;line-height:13px;">12</div>
<div class="t" style="left:807px;top:79px;font-size:10.5px;color:#000;line-height:13px;">12</div>
<div class="t" style="left:807px;top:96px;font-size:10.5px;color:#000;line-height:13px;">12</div>
<div class="t" style="left:807px;top:113px;font-size:10.5px;color:#000;line-height:13px;">12</div>
<div class="a" style="left:885px;top:1px;width:1px;height:24px;background:#d0d0d0"></div>
<div class="a" style="left:885px;top:25px;width:1px;height:102px;background:#f0f0f0"></div>
<div class="t" style="left:891px;top:7px;font-size:11px;color:#1a1a2a;line-height:13px;"></div>
<div class="t" style="left:892px;top:28px;font-size:10.5px;color:#000;line-height:13px;">$935.12</div>
<div class="t" style="left:892px;top:45px;font-size:10.5px;color:#000;line-height:13px;">$935.12</div>
<div class="t" style="left:892px;top:62px;font-size:10.5px;color:#000;line-height:13px;">$935.12</div>
<div class="t" style="left:892px;top:79px;font-size:10.5px;color:#000;line-height:13px;">$935.12</div>
<div class="t" style="left:892px;top:96px;font-size:10.5px;color:#000;line-height:13px;">$935.12</div>
<div class="t" style="left:892px;top:113px;font-size:10.5px;color:#000;line-height:13px;">$935.12</div>
<div class="a" style="left:970px;top:1px;width:1px;height:24px;background:#d0d0d0"></div>
<div class="a" style="left:970px;top:25px;width:1px;height:102px;background:#f0f0f0"></div>
<div class="t" style="left:976px;top:7px;font-size:11px;color:#1a1a2a;line-height:13px;"></div>
<div class="t" style="left:977px;top:28px;font-size:10.5px;color:#000;line-height:13px;">($510.70)</div>
<div class="t" style="left:977px;top:45px;font-size:10.5px;color:#000;line-height:13px;">($510.70)</div>
<div class="t" style="left:977px;top:62px;font-size:10.5px;color:#000;line-height:13px;">($510.70)</div>
<div class="t" style="left:977px;top:79px;font-size:10.5px;color:#000;line-height:13px;">($510.70)</div>
<div class="t" style="left:977px;top:96px;font-size:10.5px;color:#000;line-height:13px;">($510.70)</div>
<div class="t" style="left:977px;top:113px;font-size:10.5px;color:#000;line-height:13px;">($510.70)</div>
<div class="a" style="left:1055px;top:1px;width:1px;height:24px;background:#d0d0d0"></div>
<div class="a" style="left:1055px;top:25px;width:1px;height:102px;background:#f0f0f0"></div>
<div class="t" style="left:1061px;top:7px;font-size:11px;color:#1a1a2a;line-height:13px;">Win/Loss Ratio</div>
<div class="t" style="left:1062px;top:28px;font-size:10.5px;color:#000;line-height:13px;">1.831</div>
<div class="t" style="left:1062px;top:45px;font-size:10.5px;color:#000;line-height:13px;">1.831</div>
<div class="t" style="left:1062px;top:62px;font-size:10.5px;color:#000;line-height:13px;">1.831</div>
<div class="t" style="left:1062px;top:79px;font-size:10.5px;color:#000;line-height:13px;">1.831</div>
<div class="t" style="left:1062px;top:96px;font-size:10.5px;color:#000;line-height:13px;">1.831</div>
<div class="t" style="left:1062px;top:113px;font-size:10.5px;color:#000;line-height:13px;">1.831</div>
<div class="a" style="left:1140px;top:1px;width:1px;height:24px;background:#d0d0d0"></div>
<div class="a" style="left:1140px;top:25px;width:1px;height:102px;background:#f0f0f0"></div>
<div class="t" style="left:1146px;top:7px;font-size:11px;color:#1a1a2a;line-height:13px;">Ret/DD Ratio</div>
<div class="t" style="left:1147px;top:28px;font-size:10.5px;color:#000;line-height:13px;">12.097</div>
<div class="t" style="left:1147px;top:45px;font-size:10.5px;color:#000;line-height:13px;">12.097</div>
<div class="t" style="left:1147px;top:62px;font-size:10.5px;color:#000;line-height:13px;">12.097</div>
<div class="t" style="left:1147px;top:79px;font-size:10.5px;color:#000;line-height:13px;">12.097</div>
<div class="t" style="left:1147px;top:96px;font-size:10.5px;color:#000;line-height:13px;">12.097</div>
<div class="t" style="left:1147px;top:113px;font-size:10.5px;color:#000;line-height:13px;">12.097</div>
<div class="a" style="left:1225px;top:1px;width:1px;height:24px;background:#d0d0d0"></div>
<div class="a" style="left:1225px;top:25px;width:1px;height:102px;background:#f0f0f0"></div>
<div class="t" style="left:1231px;top:7px;font-size:11px;color:#1a1a2a;line-height:13px;">Ave Bars</div>
<div class="t" style="left:1232px;top:28px;font-size:10.5px;color:#000;line-height:13px;">5.07</div>
<div class="t" style="left:1232px;top:45px;font-size:10.5px;color:#000;line-height:13px;">5.07</div>
<div class="t" style="left:1232px;top:62px;font-size:10.5px;color:#000;line-height:13px;">5.07</div>
<div class="t" style="left:1232px;top:79px;font-size:10.5px;color:#000;line-height:13px;">5.07</div>
<div class="t" style="left:1232px;top:96px;font-size:10.5px;color:#000;line-height:13px;">5.07</div>
<div class="t" style="left:1232px;top:113px;font-size:10.5px;color:#000;line-height:13px;">5.07</div>
<div class="a" style="left:1310px;top:1px;width:1px;height:24px;background:#d0d0d0"></div>
<div class="a" style="left:1310px;top:25px;width:1px;height:102px;background:#f0f0f0"></div>
<div class="t" style="left:1316px;top:7px;font-size:11px;color:#1a1a2a;line-height:13px;">Ave Bars Wins</div>
<div class="t" style="left:1317px;top:28px;font-size:10.5px;color:#000;line-height:13px;">5.33</div>
<div class="t" style="left:1317px;top:45px;font-size:10.5px;color:#000;line-height:13px;">5.33</div>
<div class="t" style="left:1317px;top:62px;font-size:10.5px;color:#000;line-height:13px;">5.33</div>
<div class="t" style="left:1317px;top:79px;font-size:10.5px;color:#000;line-height:13px;">5.33</div>
<div class="t" style="left:1317px;top:96px;font-size:10.5px;color:#000;line-height:13px;">5.33</div>
<div class="t" style="left:1317px;top:113px;font-size:10.5px;color:#000;line-height:13px;">5.33</div>
<div class="a" style="left:1395px;top:1px;width:1px;height:24px;background:#d0d0d0"></div>
<div class="a" style="left:1395px;top:25px;width:1px;height:102px;background:#f0f0f0"></div>
<div class="t" style="left:1401px;top:7px;font-size:11px;color:#1a1a2a;line-height:13px;">Ave Bars Losses</div>
<div class="t" style="left:1402px;top:28px;font-size:10.5px;color:#000;line-height:13px;">4.68</div>
<div class="t" style="left:1402px;top:45px;font-size:10.5px;color:#000;line-height:13px;">4.68</div>
<div class="t" style="left:1402px;top:62px;font-size:10.5px;color:#000;line-height:13px;">4.68</div>
<div class="t" style="left:1402px;top:79px;font-size:10.5px;color:#000;line-height:13px;">4.68</div>
<div class="t" style="left:1402px;top:96px;font-size:10.5px;color:#000;line-height:13px;">4.68</div>
<div class="t" style="left:1402px;top:113px;font-size:10.5px;color:#000;line-height:13px;">4.68</div>
<svg class="a" style="left:42px;top:7px" width="16" height="14"><path d="M1 12.5 L8 1.5 L14.5 12.5 Z" fill="none" stroke="#fff" stroke-width="1.2"/><path d="M1 12 L7.5 1.5" stroke="#505050" stroke-width="0.9"/></svg>
</div>
<div class="a" style="left:1422px;top:591px;width:16px;height:127px;background:linear-gradient(90deg,#e8e8e8,#f4f4f4)"></div>
<svg class="a" style="left:1422px;top:591px" width="16" height="127"><path d="M4 13 L8 9 L12 13 Z" fill="#333"/><path d="M4 115 L8 119 L12 115 Z" fill="#333"/></svg>
<div class="a" style="left:1423px;top:610px;width:14px;height:15px;background:linear-gradient(90deg,#f6f6f6,#e8e8e8 50%,#d0d0d0);border:1px solid #a8a8a8;border-radius:2px"></div>
<div class="a" style="left:0px;top:718px;width:1440px;height:18px;background:#efefef"></div>
<div class="a" style="left:1438px;top:569px;width:2px;height:167px;background:#e6e6e6"></div>
<svg class="a" style="left:1px;top:718px" width="1438" height="18"><path d="M11 5 L7 9 L11 13 Z" fill="#333"/><path d="M1410 5 L1414 9 L1410 13 Z" fill="#333"/></svg>
<div class="a" style="left:20px;top:720px;width:961px;height:15px;background:linear-gradient(#f8f8f8,#e6e6e6 50%,#dadada);border:1px solid #a0a0a0;border-radius:2px"></div>
<svg class="a" style="left:496px;top:723px" width="8" height="8"><g fill="#777"><rect x="0" y="0" width="1" height="7"/><rect x="2" y="0" width="1" height="7"/><rect x="4" y="0" width="1" height="7"/></g></svg>
<div class="a" style="left:0px;top:736px;width:1440px;height:5px;background:#535353"></div>
<div class="a" style="left:0px;top:741px;width:1440px;height:20px;background:#f4f4f4"></div>
<div class="a" style="left:1px;top:742px;width:1438px;height:19px;background:#a3a3a3"></div>
<div class="t" style="left:4px;top:745px;font-size:12.2px;color:#3a3a3a;line-height:13px;">Output</div>
<svg class="a" style="left:1408px;top:745px" width="30" height="12"><g fill="#505050"><rect x="3.5" y="1.5" width="4" height="5" fill="none" stroke="#505050" stroke-width="1.2"/><rect x="2" y="6" width="7" height="1.4"/><rect x="5" y="7" width="1.2" height="3"/></g><path d="M19 1.5 L26 8.5 M26 1.5 L19 8.5" stroke="#444" stroke-width="1.3"/></svg>
<div class="a" style="left:0px;top:761px;width:1440px;height:80px;background:#fff"></div>
<div class="t" style="left:3px;top:761px;font-size:10.6px;color:#000;line-height:13px;">Reading price data...</div>
<div class="t" style="left:3px;top:774px;font-size:10.6px;color:#000;line-height:13px;">Can&#x27;t open price file. Check available folder paths under Options.</div>
<div class="a" style="left:1px;top:787px;width:1439px;height:13px;background:#3399ff"></div>
<div class="t" style="left:3px;top:787px;font-size:10.6px;color:#fff;line-height:13px;">Problem reading price data. Build process cancelled.</div>
<div class="a" style="left:0px;top:841px;width:1440px;height:20px;background:linear-gradient(#2a2a2a 0,#2a2a2a 1px,#474c56 1px,#434851 8px,#2c2c2c 8px,#2c2c2c)"></div>
<div class="t" style="left:4px;top:846px;font-size:11px;color:#fff;line-height:13px;">For Help, press F1</div>
<div class="a" style="left:1104px;top:844px;width:1px;height:14px;background:#555"></div>
<div class="t" style="left:1109px;top:846px;font-size:11px;color:#fff;line-height:13px;">Memory Usage:</div>
<div class="a" style="left:1195px;top:844px;width:1px;height:14px;background:#555"></div>
<div class="a" style="left:1200px;top:845px;width:148px;height:13px;background:linear-gradient(#f4f4f4,#dcdcdc 50%,#cfcfcf);border:1px solid #8a8a8a;border-radius:2px"></div>
<div class="a" style="left:1203px;top:850px;width:44px;height:4px;background:#10d020"></div>
<div class="t" style="left:1263px;top:846px;font-size:11px;color:#000;line-height:13px;">31%</div>
<div class="a" style="left:1351px;top:844px;width:1px;height:14px;background:#555"></div>
<div class="t" style="left:1355px;top:847px;font-size:10.2px;color:#777;line-height:13px;">CAP</div>
<div class="a" style="left:1377px;top:844px;width:1px;height:14px;background:#555"></div>
<div class="t" style="left:1380px;top:847px;font-size:10.2px;color:#fff;line-height:13px;">NUM</div>
<div class="a" style="left:1409px;top:844px;width:1px;height:14px;background:#555"></div>
<div class="t" style="left:1413px;top:847px;font-size:10.2px;color:#777;line-height:13px;">SCRL</div>
<div class="a" style="left:0px;top:861px;width:1440px;height:39px;background:linear-gradient(90deg,#8a9cb4 0,#8a9cb4 56px,#a9bdd6 60px,#aabfd8 1205px,#9aaec8 1222px,#8296b0 1240px,#7a8ea8 1260px,#7890a8 1440px);border-top:1px solid #c4d4e8"></div>
<svg class="a" style="left:7px;top:862px" width="40" height="38"><defs><radialGradient id="orb" cx="50%" cy="40%" r="60%"><stop offset="0" stop-color="#6ac0f0"/><stop offset="0.6" stop-color="#1a5aa0"/><stop offset="1" stop-color="#0a2a60"/></radialGradient></defs><circle cx="20" cy="19" r="18" fill="url(#orb)" stroke="#1a3a6a"/><path d="M11 12 Q15 9 19 12 L18 18 Q14 16 10 18 Z" fill="#f05a20"/><path d="M21 12 Q25 14 29 11 L28 17 Q24 19 20 18 Z" fill="#7ac030"/><path d="M10 20 Q14 18 18 20 L17 26 Q13 24 9 26 Z" fill="#30a0e8"/><path d="M20 20 Q24 22 28 19 L27 25 Q23 27 19 26 Z" fill="#f8c020"/></svg>
<div class="a" style="left:59px;top:861px;width:59px;height:40px;border:1px solid #5a6a80;border-radius:3px;background:linear-gradient(rgba(255,255,255,0.35),rgba(255,255,255,0.1))"></div>
<div class="a" style="left:245px;top:861px;width:60px;height:40px;border:1px solid #5a6a80;border-radius:3px;background:linear-gradient(rgba(255,255,255,0.35),rgba(255,255,255,0.1))"></div>
<div class="a" style="left:307px;top:861px;width:60px;height:40px;border:1px solid #5a6a80;border-radius:3px;background:linear-gradient(rgba(255,255,255,0.35),rgba(255,255,255,0.1))"></div>
<div class="a" style="left:369px;top:861px;width:59px;height:40px;border:1px solid #5a6a80;border-radius:3px;background:linear-gradient(rgba(255,255,255,0.35),rgba(255,255,255,0.1))"></div>
<div class="a" style="left:431px;top:861px;width:59px;height:40px;border:1px solid #5a6a80;border-radius:3px;background:linear-gradient(#dde6f0,#b8c8dc)"></div>
<svg class="a" style="left:72px;top:866px" width="34" height="32"><path d="M2 6 H12 L14 4 H30 V28 H2 Z" fill="#e8c860" stroke="#b89040"/><rect x="6" y="3" width="6" height="3" fill="#fff"/><rect x="16" y="6" width="8" height="3" fill="#fff"/><path d="M2 10 H31 V28 H2 Z" fill="#f4e0a0" stroke="#c8a050"/><path d="M6 28 V20 H27 V28 H23 V24 H10 V28 Z" fill="#7ac8f0" stroke="#3a90c8"/></svg>
<svg class="a" style="left:134px;top:865px" width="30" height="32"><path d="M8 1 H22 L27 6 V30 H8 Z" fill="#fdfdfd" stroke="#ccc"/><circle cx="17" cy="14" r="6.5" fill="none" stroke="#f08a10" stroke-width="3"/><path d="M12 19 L4 27" stroke="#f08a10" stroke-width="4" stroke-linecap="round"/></svg>
<svg class="a" style="left:197px;top:866px" width="30" height="30"><circle cx="15" cy="15" r="14" fill="#e04030"/><path d="M15 15 L2.9 22 A14 14 0 0 1 3 8 Z" fill="#30a050"/><path d="M15 15 L27.1 8 A14 14 0 0 1 15 29 Z" fill="#f8c820"/><path d="M15 15 L15 29 A14 14 0 0 1 2.9 22 Z" fill="#30a050"/><circle cx="15" cy="15" r="6.5" fill="#fff"/><circle cx="15" cy="15" r="5" fill="#3a80e0"/></svg>
<svg class="a" style="left:258px;top:864px" width="34" height="34"><path d="M3 6 L24 3 L28 28 L7 31 Z" fill="#f4f4f0" stroke="#999"/><g stroke="#888" stroke-width="0.8"><path d="M7 10 L22 8 M7 13 L22 11 M8 16 L23 14 M8 19 L20 17 M8 22 L18 21"/></g><path d="M14 24 L30 4 L32 6 L16 26 L13 27 Z" fill="#f0a020" stroke="#705010"/></svg>
<svg class="a" style="left:320px;top:864px" width="32" height="34"><rect x="2" y="2" width="28" height="30" rx="2" fill="#1a40c0" stroke="#0a2080"/><rect x="7" y="2" width="18" height="10" fill="#ffffff"/><rect x="18" y="4" width="4" height="6" fill="#1a40c0"/><rect x="5" y="16" width="22" height="14" fill="#f4f4f4"/><g fill="#d02020"><rect x="7" y="19" width="18" height="1.5"/><rect x="7" y="23" width="18" height="1.5"/><rect x="7" y="27" width="18" height="1.5"/></g></svg>
<svg class="a" style="left:381px;top:865px" width="34" height="32"><rect x="2" y="2" width="30" height="22" rx="2" fill="#4a90d8" stroke="#1a5aa0"/><circle cx="10" cy="10" r="5" fill="#fff"/><path d="M10 10 V5 A5 5 0 0 1 15 10 Z" fill="#f0a020"/><g fill="#fff"><rect x="17" y="6" width="12" height="4" rx="1"/><rect x="17" y="13" width="12" height="4" rx="1"/></g><ellipse cx="17" cy="27" rx="7" ry="4" fill="#e8e8e8" stroke="#999"/></svg>
<svg class="a" style="left:444px;top:864px" width="34" height="34"><rect x="13" y="1" width="9" height="8" fill="#d03a2a"/><path d="M17.5 2 V8 M14.5 5 H20.5" stroke="#fff"/><rect x="9" y="12" width="8" height="7" fill="#5a9a3a"/><rect x="19" y="12" width="8" height="7" fill="#5a9a3a"/><path d="M10.5 15.5 H15.5 M20.5 15.5 H25.5 M23 13 V18" stroke="#fff"/><rect x="2" y="22" width="30" height="10" fill="#3f80c8"/><g stroke="#fff" stroke-width="1.2"><path d="M8 24 V30 M16 24 V30 M24 24 V30"/></g></svg>
<div class="t" style="left:940px;top:873px;font-size:11px;color:#111;line-height:13px;font-weight:bold;font-style:italic">WWW.TRADING-SOFTWARE-COLLECTION.COM</div>
<div class="t" style="left:1256px;top:872px;font-size:11.5px;color:#fff;line-height:13px;">EN</div>
<svg class="a" style="left:1285px;top:876px" width="10" height="6"><path d="M0 6 L5 1 L10 6 Z" fill="#fff"/></svg>
<svg class="a" style="left:1306px;top:871px" width="18" height="18"><rect x="4" y="4" width="12" height="9" fill="none" stroke="#fff" stroke-width="1.4"/><rect x="1" y="1" width="5" height="6" fill="none" stroke="#fff" stroke-width="1.2"/><path d="M6 16 H14 M10 13 V16" stroke="#fff" stroke-width="1.4"/></svg>
<svg class="a" style="left:1331px;top:872px" width="18" height="16"><path d="M1 5 H4 L9 1 V15 L4 11 H1 Z" fill="#fff"/><path d="M11 4 Q14 8 11 12 M13 2 Q17 8 13 14" fill="none" stroke="#fff" stroke-width="1.3"/></svg>
<div class="t" style="left:1368px;top:866px;font-size:11.5px;color:#fff;line-height:13px;">6:47 PM</div>
<div class="t" style="left:1360px;top:883px;font-size:11.5px;color:#fff;line-height:13px;">11/26/2014</div>
<div class="a" style="left:1427px;top:862px;width:13px;height:38px;background:linear-gradient(90deg,#7a8ea8,#98acc4);border:1px solid #4a5a70;border-radius:2px"></div>
<div class="a" style="left:393px;top:209px;width:654px;height:442px;border:1px solid #000;border-radius:5px 5px 0 0;background:#f0f0f0;overflow:hidden">
<div class="a" style="left:0;top:0;width:652px;height:24px;background:linear-gradient(#98b0cc,#a9c0dc 50%,#bcd2ee)"></div>
<div class="a" style="left:0;top:24px;width:1px;height:416px;background:#bcd2ee"></div>
<div class="a" style="left:1px;top:24px;width:1px;height:416px;background:#d8e6f6"></div>
<div class="a" style="right:0;top:0;width:1px;height:440px;background:#3cc8f0"></div>
<div class="a" style="left:0;bottom:0;width:652px;height:1px;background:#3cc8f0"></div>
</div>
<div class="t" style="left:401px;top:216px;font-size:12px;color:#000;line-height:14px;">Options</div>
<div class="a" style="left:1011px;top:214px;width:31px;height:17px;border:1px solid #4a1414;border-radius:3px;background:linear-gradient(#eab0a0,#e09080 45%,#c84a2c 50%,#d06040 80%,#e08a70)"></div>
<svg class="a" style="left:1019px;top:216px" width="15" height="13"><path d="M3 3 L12 10 M12 3 L3 10" stroke="#4a4040" stroke-width="4.4" stroke-linecap="butt"/><path d="M3 3 L12 10 M12 3 L3 10" stroke="#fafafa" stroke-width="2.6" stroke-linecap="butt"/></svg>
<div class="a" style="left:407px;top:251px;width:309px;height:114px;border:1px solid #d5dfe5;border-radius:3px;box-shadow:inset 1px 1px 0 #fff"></div>
<div class="t" style="left:412px;top:245px;padding:0 3px;background:#f0f0f0;font-size:10.7px;line-height:12px">Parallel Processing</div>
<div class="a" style="left:726px;top:251px;width:308px;height:114px;border:1px solid #d5dfe5;border-radius:3px;box-shadow:inset 1px 1px 0 #fff"></div>
<div class="t" style="left:731px;top:245px;padding:0 3px;background:#f0f0f0;font-size:10.7px;line-height:12px">Default Performance Metrics</div>
<div class="a" style="left:407px;top:374px;width:309px;height:116px;border:1px solid #d5dfe5;border-radius:3px;box-shadow:inset 1px 1px 0 #fff"></div>
<div class="t" style="left:412px;top:368px;padding:0 3px;background:#f0f0f0;font-size:10.7px;line-height:12px">Time-Out Interval</div>
<div class="a" style="left:726px;top:374px;width:308px;height:116px;border:1px solid #d5dfe5;border-radius:3px;box-shadow:inset 1px 1px 0 #fff"></div>
<div class="t" style="left:731px;top:368px;padding:0 3px;background:#f0f0f0;font-size:10.7px;line-height:12px">Auto-Save</div>
<div class="a" style="left:407px;top:499px;width:309px;height:114px;border:1px solid #d5dfe5;border-radius:3px;box-shadow:inset 1px 1px 0 #fff"></div>
<div class="t" style="left:412px;top:493px;padding:0 3px;background:#f0f0f0;font-size:10.7px;line-height:12px">Price File Folders</div>
<div class="t" style="left:425px;top:268px;font-size:10.75px;color:#000;line-height:13px;">Maximum number of concurrent (parallel)</div>
<div class="t" style="left:425px;top:281px;font-size:10.75px;color:#000;line-height:13px;">processes used during build:</div>
<div class="a" style="left:633px;top:267px;width:39px;height:20px;background:#fff;border:1px solid #d8dde4;border-top-color:#b8c0c8"></div>
<div class="t" style="left:638px;top:270px;font-size:11px;color:#000;line-height:13px;">8</div>
<div class="a" style="left:673px;top:267px;width:15px;height:10px;border:1px solid #c0c8d0;border-radius:2px 2px 0 0;background:linear-gradient(#f6f6f6,#e4e4e4)"></div>
<div class="a" style="left:673px;top:277px;width:15px;height:10px;border:1px solid #c0c8d0;border-radius:0 0 2px 2px;background:linear-gradient(#f6f6f6,#e4e4e4)"></div>
<svg class="a" style="left:673px;top:267px" width="15" height="20"><path d="M4 7 L7.5 3.5 L11 7 Z" fill="#4a5a8a"/><path d="M4 13 L7.5 16.5 L11 13 Z" fill="#4a5a8a"/></svg>
<div class="t" style="left:425px;top:303px;font-size:10.9px;color:#000;line-height:13px;">This is normally set to the number of processor cores.</div>
<div class="t" style="left:425px;top:316px;font-size:10.9px;color:#000;line-height:13px;">Reduce the number to free up cores for other processing</div>
<div class="t" style="left:425px;top:329px;font-size:10.9px;color:#000;line-height:13px;">tasks or increase the number if Builder does not recognize</div>
<div class="t" style="left:425px;top:342px;font-size:10.9px;color:#000;line-height:13px;">all the processor cores on this computer.</div>
<div class="t" style="left:743px;top:269px;font-size:10.9px;color:#000;line-height:13px;">Use the button to change the list of performance metrics</div>
<div class="t" style="left:743px;top:282px;font-size:10.9px;color:#000;line-height:13px;">used for new projects in the in-sample and OOS</div>
<div class="t" style="left:743px;top:295px;font-size:10.9px;color:#000;line-height:13px;">performance tables.</div>
<div class="btn" style="left:744px;top:315px;width:87px;height:21px;line-height:19px;padding-top:1px;font-size:10.6px;">Change Metrics</div>
<div class="t" style="left:425px;top:393px;font-size:10.9px;color:#000;line-height:13px;">Maximum time program will wait for</div>
<div class="t" style="left:425px;top:406px;font-size:10.9px;color:#000;line-height:13px;">a strategy to evaluate:</div>
<div class="a" style="left:611px;top:397px;width:45px;height:20px;background:#fff;border:1px solid #d8dde4;border-top-color:#b8c0c8"></div>
<div class="t" style="left:617px;top:401px;font-size:11px;color:#000;line-height:13px;">2</div>
<div class="t" style="left:664px;top:401px;font-size:10.9px;color:#000;line-height:13px;">minutes</div>
<div class="t" style="left:425px;top:429px;font-size:10.9px;color:#000;line-height:13px;">Increase this time if the program gives a &quot;timed out&quot; error</div>
<div class="t" style="left:425px;top:442px;font-size:10.9px;color:#000;line-height:13px;">and you&#x27;re willing to wait longer for results. Caution: A</div>
<div class="t" style="left:425px;top:455px;font-size:10.9px;color:#000;line-height:13px;">time-out error may indicate a problem with a strategy,</div>
<div class="t" style="left:425px;top:468px;font-size:10.9px;color:#000;line-height:13px;">such as an excessive number of trades.</div>
<div class="t" style="left:743px;top:393px;font-size:10.9px;color:#000;line-height:13px;">Select this option to automatically save the project file</div>
<div class="t" style="left:743px;top:406px;font-size:10.9px;color:#000;line-height:13px;">after each generation during the build process.</div>
<div class="a" style="left:746px;top:430px;width:13px;height:13px;border:1px solid #8f8f8f;background:linear-gradient(135deg,#dcdcdc,#fafafa)"></div>
<div class="a" style="left:748px;top:432px;width:9px;height:9px;border:1px solid #c8c8c8;background:linear-gradient(135deg,#e0e0e0,#f8f8f8)"></div>
<div class="t" style="left:762px;top:431px;font-size:10.8px;color:#000;line-height:13px;">Auto-save project file while building</div>
<div class="t" style="left:425px;top:518px;font-size:10.9px;color:#000;line-height:13px;">Use the button to change where the program looks for</div>
<div class="t" style="left:425px;top:531px;font-size:10.9px;color:#000;line-height:13px;">price data files.</div>
<div class="btn" style="left:427px;top:555px;width:190px;height:21px;line-height:19px;padding-top:1px;font-size:10.5px;">Add or Change Price File Folders</div>
<div class="btn" style="left:798px;top:615px;width:73px;height:21px;line-height:19px;padding-top:1px;font-size:11px;border-color:#3c7fb1;box-shadow:inset 0 0 0 1px #48d0f8">OK</div>
<div class="btn" style="left:879px;top:615px;width:73px;height:21px;line-height:19px;padding-top:1px;font-size:11px;">Cancel</div>
<div class="btn" style="left:960px;top:615px;width:73px;height:21px;line-height:19px;padding-top:1px;font-size:11px;"></div>
<svg class="a" style="left:973px;top:617px" width="17" height="17"><defs><radialGradient id="hq" cx="40%" cy="30%" r="70%"><stop offset="0" stop-color="#6aa8ff"/><stop offset="1" stop-color="#0a40b8"/></radialGradient></defs><circle cx="8.5" cy="8.5" r="7.8" fill="url(#hg1)"/><text x="8.5" y="13" font-family="Liberation Sans" font-weight="bold" font-size="12" fill="#fff" text-anchor="middle">?</text></svg>
<div class="t" style="left:996px;top:619px;font-size:11px;color:#000;line-height:13px;">Help</div>
</body></html>
